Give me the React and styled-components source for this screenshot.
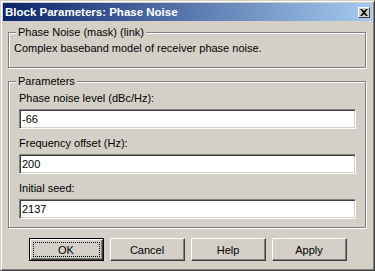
import React from 'react';
import styled, { createGlobalStyle } from 'styled-components';

const GlobalStyle = createGlobalStyle`
  html, body {
    margin: 0;
    padding: 0;
    background: #d4d0c8;
  }
  body {
    font-family: "Liberation Sans", Arial, sans-serif;
    font-size: 11px;
    color: #000;
  }
`;

const Window = styled.div`
  box-sizing: border-box;
  width: 375px;
  height: 271px;
  display: flex;
  flex-direction: column;
  background: #d4d0c8;
  border: 1px solid;
  border-color: #d4d0c8 #404040 #404040 #d4d0c8;
  box-shadow: inset 1px 1px 0 #fff, inset -1px -1px 0 #808080;
  padding: 2px;
`;

const TitleBar = styled.div`
  height: 18px;
  display: flex;
  align-items: center;
  justify-content: space-between;
  padding: 0 2px 0 2px;
  background: linear-gradient(to right, #0a246a, #a6caf0);
  color: #fff;
  font-weight: bold;
  font-size: 11.5px;
`;

const TitleText = styled.span`
  line-height: 18px;
  white-space: nowrap;
`;

const CloseButton = styled.div`
  box-sizing: border-box;
  width: 12px;
  height: 11px;
  background: #d4d0c8;
  border: 1px solid;
  border-color: #fff #404040 #404040 #fff;
  display: flex;
  align-items: center;
  justify-content: center;
`;

const Body = styled.div`
  flex: 1;
  display: flex;
  flex-direction: column;
  padding: 5px 6px 0 5px;
`;

const Group = styled.fieldset`
  margin: ${(p) => (p.$first ? '0' : '7px 0 0')};
  padding: 0;
  min-width: 0;
  border: 1px solid #808080;
  box-shadow: 1px 1px 0 #fff, inset 1px 1px 0 #fff;
`;

const Legend = styled.legend`
  margin-left: 7px;
  padding: 0 2px;
  line-height: 13px;
  background: #d4d0c8;
`;

const Description = styled.div`
  padding: 3px 5px 12px 5px;
  line-height: 13px;
`;

const Params = styled.div`
  display: flex;
  flex-direction: column;
  gap: 8px;
  padding: 4px 9px 8px 10px;
`;

const Field = styled.div`
  display: flex;
  flex-direction: column;
  gap: 4px;
`;

const Label = styled.div`
  line-height: 13px;
`;

const TextInput = styled.input`
  box-sizing: border-box;
  height: 20px;
  width: 100%;
  margin: 0;
  padding: 0 2px;
  font: inherit;
  color: #000;
  background: #fff;
  outline: none;
  border: 1px solid;
  border-color: #808080 #fff #fff #808080;
  box-shadow: inset 1px 1px 0 #404040, inset -1px -1px 0 #d4d0c8;
`;

const ButtonRow = styled.div`
  display: flex;
  justify-content: center;
  gap: 6px;
  margin-top: 10px;
  padding-left: 1px;
`;

const Button = styled.button`
  box-sizing: border-box;
  width: 75px;
  height: 23px;
  margin: 0;
  padding: 0;
  font: inherit;
  color: #000;
  background: #d4d0c8;
  border: 1px solid;
  border-color: ${(p) => (p.$default ? '#000' : '#fff #404040 #404040 #fff')};
  box-shadow: ${(p) =>
    p.$default
      ? 'inset 1px 1px 0 #fff, inset -1px -1px 0 #404040, inset -2px -2px 0 #808080'
      : 'inset -1px -1px 0 #808080, inset 1px 1px 0 #d4d0c8'};
  display: flex;
  align-items: center;
  justify-content: center;
`;

const Focus = styled.span`
  box-sizing: border-box;
  width: 67px;
  height: 15px;
  border: 1px dotted #000;
  display: flex;
  align-items: center;
  justify-content: center;
`;

const fields = [
  { label: 'Phase noise level (dBc/Hz):', value: '-66' },
  { label: 'Frequency offset (Hz):', value: '200' },
  { label: 'Initial seed:', value: '2137' },
];

const App = () => {
  return (
    <>
      <GlobalStyle />
      <Window>
        <TitleBar>
          <TitleText>Block Parameters: Phase Noise</TitleText>
          <CloseButton>
            <svg width="8" height="7" viewBox="0 0 8 7">
              <path
                d="M0 0h2l2 2 2-2h2L5 3.5 8 7H6L4 5 2 7H0l3-3.5z"
                fill="#000"
              />
            </svg>
          </CloseButton>
        </TitleBar>
        <Body>
          <Group $first>
            <Legend>Phase Noise (mask) (link)</Legend>
            <Description>Complex baseband model of receiver phase noise.</Description>
          </Group>
          <Group>
            <Legend>Parameters</Legend>
            <Params>
              {fields.map((f) => (
                <Field key={f.label}>
                  <Label>{f.label}</Label>
                  <TextInput defaultValue={f.value} />
                </Field>
              ))}
            </Params>
          </Group>
          <ButtonRow>
            <Button $default>
              <Focus>OK</Focus>
            </Button>
            <Button>Cancel</Button>
            <Button>Help</Button>
            <Button>Apply</Button>
          </ButtonRow>
        </Body>
      </Window>
    </>
  );
};

export default App;
